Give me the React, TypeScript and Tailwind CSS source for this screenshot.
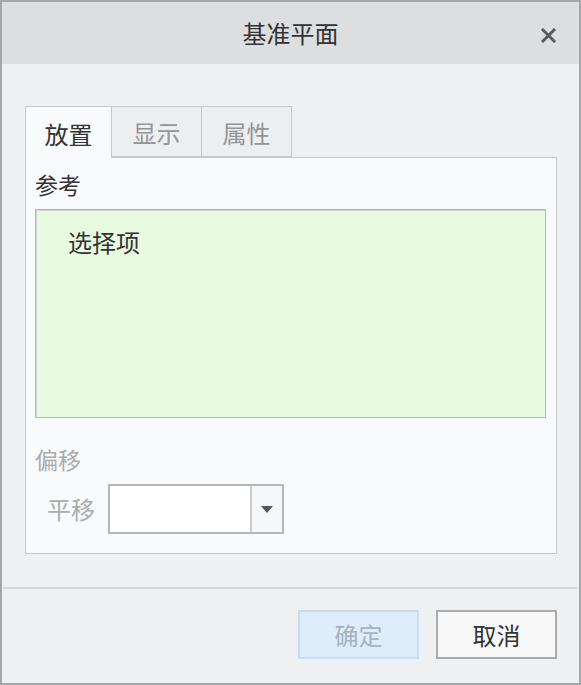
export default function App() {
  return (
    <div
      className="flex h-[685px] w-[581px] flex-col border-2 border-[#a4a6a8] bg-[#eff0f1] text-[#333]"
      style={{ fontFamily: '"Noto Sans CJK SC", "Noto Sans", sans-serif' }}
    >
      {/* Title bar */}
      <div className="relative flex h-[62px] shrink-0 items-center justify-center bg-[#dcdedf]">
        <span className="text-[24px] leading-none">基准平面</span>
        <button className="absolute right-[21px] top-[23px] flex h-[20px] w-[20px] items-center justify-center">
          <svg width="15" height="15" viewBox="0 0 15 15">
            <path d="M2 2 L13 13 M13 2 L2 13" stroke="#5a5a5a" strokeWidth="3" strokeLinecap="square" />
          </svg>
        </button>
      </div>

      {/* Body */}
      <div className="flex flex-1 flex-col px-[23px] pt-[42px]">
        {/* Tabs */}
        <div className="flex h-[51px]">
          <div className="relative z-10 -mb-px flex w-[87px] items-center justify-center border border-b-0 border-[#c6c8ca] bg-[#f9fafb] pt-[2px] text-[24px]">
            放置
          </div>
          <div className="flex w-[90px] items-center justify-center border border-l-0 border-[#c6c8ca] bg-[#eceef0] pt-[2px] text-[24px] text-[#939597]">
            显示
          </div>
          <div className="flex w-[90px] items-center justify-center border border-l-0 border-[#c6c8ca] bg-[#eceef0] pt-[2px] text-[24px] text-[#939597]">
            属性
          </div>
        </div>

        {/* Panel */}
        <div className="flex h-[397px] w-[532px] flex-col border border-[#c6c8ca] bg-[#f9fafb] px-[9px]">
          <div className="mt-[14px] text-[23px] leading-[24px]">参考</div>
          <div className="mt-[13px] h-[209px] w-[511px] border border-[#b4b6b4] bg-[#e8fadf] pl-[32px] pt-[19px] text-[24px] leading-[26px] shadow-[inset_1px_1px_0_#d0d4d0]">
            选择项
          </div>
          <div className="mt-[29px] text-[23px] leading-[24px] text-[#a9abad]">偏移</div>
          <div className="mt-[13px] flex items-center">
            <span className="ml-[12px] w-[61px] text-[24px] text-[#a9abad]">平移</span>
            <div className="flex h-[50px] w-[176px] border-2 border-[#b4b6b8] bg-white">
              <div className="flex-1" />
              <div className="flex w-[32px] items-center justify-center border-l-2 border-[#c8cacc] bg-[#f6f7f8]">
                <svg width="12" height="7" viewBox="0 0 12 7">
                  <path d="M0 0 H12 L6 7 Z" fill="#555" />
                </svg>
              </div>
            </div>
          </div>
        </div>
      </div>

      {/* Footer */}
      <div className="mx-[1px] h-[2px] shrink-0 bg-[#d4d6d8]" />
      <div className="flex h-[94px] shrink-0 justify-end gap-[17px] pr-[22px] pt-[21px]">
        <button className="flex h-[49px] w-[121px] items-center justify-center border-2 border-[#c8def0] bg-[#deedf9] text-[24px] text-[#a6b2bc]">
          确定
        </button>
        <button className="flex h-[49px] w-[121px] items-center justify-center border-2 border-[#a9abad] bg-[#f8f8f8] text-[24px] text-[#333]">
          取消
        </button>
      </div>
    </div>
  )
}
